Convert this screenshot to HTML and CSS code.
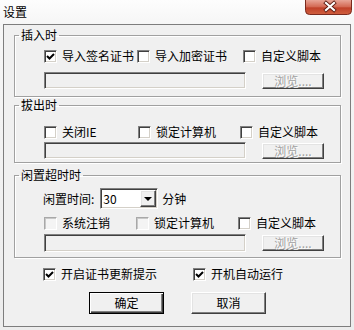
FILE: index.html
```html
<!DOCTYPE html>
<html lang="zh-CN">
<head>
<meta charset="utf-8">
<title>设置</title>
<link rel="stylesheet" href="styles.css">
</head>
<body>
<div class="window">
  <div class="titlebar">
    <span class="title">设置</span>
    <svg class="close" width="47" height="15" viewBox="0 0 47 15">
      <defs>
        <linearGradient id="cg" x1="0" y1="0" x2="0" y2="1">
          <stop offset="0" stop-color="#e8a597"/>
          <stop offset="0.45" stop-color="#d46b56"/>
          <stop offset="0.55" stop-color="#c0412a"/>
          <stop offset="1" stop-color="#d0603f"/>
        </linearGradient>
      </defs>
      <path d="M0.5 0 V10.5 Q0.5 14.5 4.5 14.5 H42.5 Q46.5 14.5 46.5 10.5 V0" fill="url(#cg)" stroke="#7a2a1e"/>
      <path d="M21 3 L29 10 M29 3 L21 10" stroke="#5a1a10" stroke-width="3.8" stroke-linecap="square"/>
      <path d="M21 3 L29 10 M29 3 L21 10" stroke="#ffffff" stroke-width="2.2" stroke-linecap="square"/>
    </svg>
  </div>
  <div class="client">
    <fieldset class="group g1">
      <legend>插入时</legend>
      <div class="gbody">
        <div class="checks">
          <label class="chk w93"><span class="box checked"><svg width="11" height="11" viewBox="0 0 11 11"><path d="M2 5 L4.5 7.5 L9 3" fill="none" stroke="#000" stroke-width="2"/></svg></span>导入签名证书</label>
          <label class="chk w106"><span class="box"></span>导入加密证书</label>
          <label class="chk"><span class="box"></span>自定义脚本</label>
        </div>
        <div class="path">
          <div class="input"></div>
          <div class="browse">浏览....</div>
        </div>
      </div>
    </fieldset>

    <fieldset class="group g2">
      <legend>拔出时</legend>
      <div class="gbody">
        <div class="checks">
          <label class="chk w94"><span class="box"></span>关闭IE</label>
          <label class="chk w102"><span class="box"></span>锁定计算机</label>
          <label class="chk"><span class="box"></span>自定义脚本</label>
        </div>
        <div class="path">
          <div class="input"></div>
          <div class="browse">浏览....</div>
        </div>
      </div>
    </fieldset>

    <fieldset class="group g3">
      <legend>闲置超时时</legend>
      <div class="gbody">
        <div class="idle">
          <span class="lbl">闲置时间:</span>
          <div class="combo"><span class="val">30</span><span class="arrow"><span class="tri"></span></span></div>
          <span class="unit">分钟</span>
        </div>
        <div class="checks">
          <label class="chk w92"><span class="box dis"></span>系统注销</label>
          <label class="chk w102"><span class="box dis"></span>锁定计算机</label>
          <label class="chk"><span class="box"></span>自定义脚本</label>
        </div>
        <div class="path">
          <div class="input"></div>
          <div class="browse">浏览....</div>
        </div>
      </div>
    </fieldset>

    <div class="bottom">
      <label class="chk w150"><span class="box checked"><svg width="11" height="11" viewBox="0 0 11 11"><path d="M2 5 L4.5 7.5 L9 3" fill="none" stroke="#000" stroke-width="2"/></svg></span>开启证书更新提示</label>
      <label class="chk"><span class="box checked"><svg width="11" height="11" viewBox="0 0 11 11"><path d="M2 5 L4.5 7.5 L9 3" fill="none" stroke="#000" stroke-width="2"/></svg></span>开机自动运行</label>
    </div>

    <div class="buttons">
      <div class="btn default">确定</div>
      <div class="btn">取消</div>
    </div>
  </div>
</div>
</body>
</html>
```
FILE: styles.css
```css
* { box-sizing: border-box; }
html, body { margin: 0; padding: 0; }
body {
  width: 354px;
  height: 330px;
  overflow: hidden;
  font-family: "Noto Sans CJK SC", "Noto Sans", sans-serif;
  font-size: 12px;
  line-height: 14px;
  color: #000;
  background: #ededed;
}
.window {
  width: 354px;
  height: 330px;
  display: flex;
  flex-direction: column;
  background: linear-gradient(to bottom, #fdfdfd 0, #f6f6f6 24px, #ececec 100%);
}
.titlebar {
  height: 24px;
  flex: none;
  display: flex;
  align-items: center;
  padding-left: 3px;
}
.title { font-size: 12px; }
.close {
  display: block;
  margin-left: auto;
  margin-right: 2px;
  align-self: flex-start;
}
.client {
  margin-left: 3px;
  width: 348px;
  height: 303px;
  border: 1px solid #7d7d7d;
  background: #f0f0f0;
  display: flex;
  flex-direction: column;
  align-items: flex-start;
}
.group {
  margin: 0 0 0 10px;
  padding: 0;
  width: 327px;
  border: 1px solid #a0a0a0;
  box-shadow: inset 1px 1px 0 #fff, 1px 1px 0 #fff;
  min-inline-size: 0;
}
.group legend {
  padding: 0 2px;
  margin-left: 4px;
  line-height: 14px;
  height: 14px;
}
.g1 { margin-top: 3px; }
.g2 { margin-top: 1px; }
.g3 { margin-top: 5px; }
.g1 .gbody { padding: 7px 0 7px 29px; }
.g2 .gbody { padding: 13px 0 3px 29px; }
.g3 .gbody { padding: 6px 0 5px 29px; }
.g1 .path { margin-top: 9px; }
.g2 .path { margin-top: 3px; }
.g3 .checks { margin-top: 7px; }
.g3 .path { margin-top: 4px; height: 18px; }

.checks { display: flex; height: 14px; }
.chk { display: flex; align-items: center; height: 14px; white-space: nowrap; }
.w92 { width: 92px; }
.w93 { width: 93px; }
.w94 { width: 94px; }
.w102 { width: 102px; }
.w106 { width: 106px; }
.w150 { width: 150px; }
.box {
  flex: none;
  width: 13px;
  height: 13px;
  margin-right: 5px;
  background: #fff;
  border: 1px solid;
  border-color: #808080 #ffffff #ffffff #808080;
  box-shadow: inset 1px 1px 0 #404040, inset -1px -1px 0 #d4d0c8;
  display: flex;
}
.box svg { display: block; }
.box.dis { background: #f4f4f4; border-color: #a8a8a8 #fff #fff #a8a8a8; box-shadow: inset 1px 1px 0 #c8c8c8; }

.path { display: flex; align-items: center; height: 17px; }
.input {
  width: 202px;
  height: 100%;
  background: #f0f0f0;
  border: 1px solid;
  border-color: #808080 #ffffff #ffffff #808080;
  box-shadow: inset 1px 1px 0 #404040, inset -1px -1px 0 #d4d0c8;
}
.browse {
  margin-left: 16px;
  width: 62px;
  height: 16px;
  display: flex;
  align-items: center;
  justify-content: center;
  color: #a0a0a0;
  text-shadow: 1px 1px 0 #fff;
  border: 1px solid;
  border-color: #ffffff #404040 #404040 #ffffff;
  box-shadow: inset -1px -1px 0 #808080, inset 1px 1px 0 #e3e3e3;
}

.idle { display: flex; align-items: center; height: 21px; margin-left: -1px; }
.combo {
  margin-left: 6px;
  width: 58px;
  height: 21px;
  background: #fff;
  border: 1px solid;
  border-color: #808080 #ffffff #ffffff #808080;
  box-shadow: inset 1px 1px 0 #404040, inset -1px -1px 0 #d4d0c8;
  display: flex;
  align-items: center;
  padding-left: 2px;
}
.arrow {
  margin-left: auto;
  margin-right: 1px;
  width: 16px;
  height: 17px;
  background: #f0f0f0;
  border: 1px solid;
  border-color: #ffffff #404040 #404040 #ffffff;
  box-shadow: inset -1px -1px 0 #808080, inset 1px 1px 0 #e3e3e3;
  display: flex;
  align-items: center;
  justify-content: center;
}
.tri {
  width: 0;
  height: 0;
  border-top: 4px solid #000;
  border-left: 4px solid transparent;
  border-right: 4px solid transparent;
}
.unit { margin-left: 4px; }

.bottom { display: flex; margin: 9px 0 0 39px; height: 14px; }
.buttons { display: flex; gap: 27px; margin: 11px 0 0 85px; }
.btn {
  width: 75px;
  height: 22px;
  display: flex;
  align-items: center;
  justify-content: center;
  border: 1px solid;
  border-color: #ffffff #404040 #404040 #ffffff;
  box-shadow: inset -1px -1px 0 #808080, inset 1px 1px 0 #e3e3e3;
  background: #f0f0f0;
}
.btn.default {
  border: 1px solid #000;
  box-shadow: inset 1px 1px 0 #fff, inset -1px -1px 0 #404040, inset -2px -2px 0 #808080;
}
```
